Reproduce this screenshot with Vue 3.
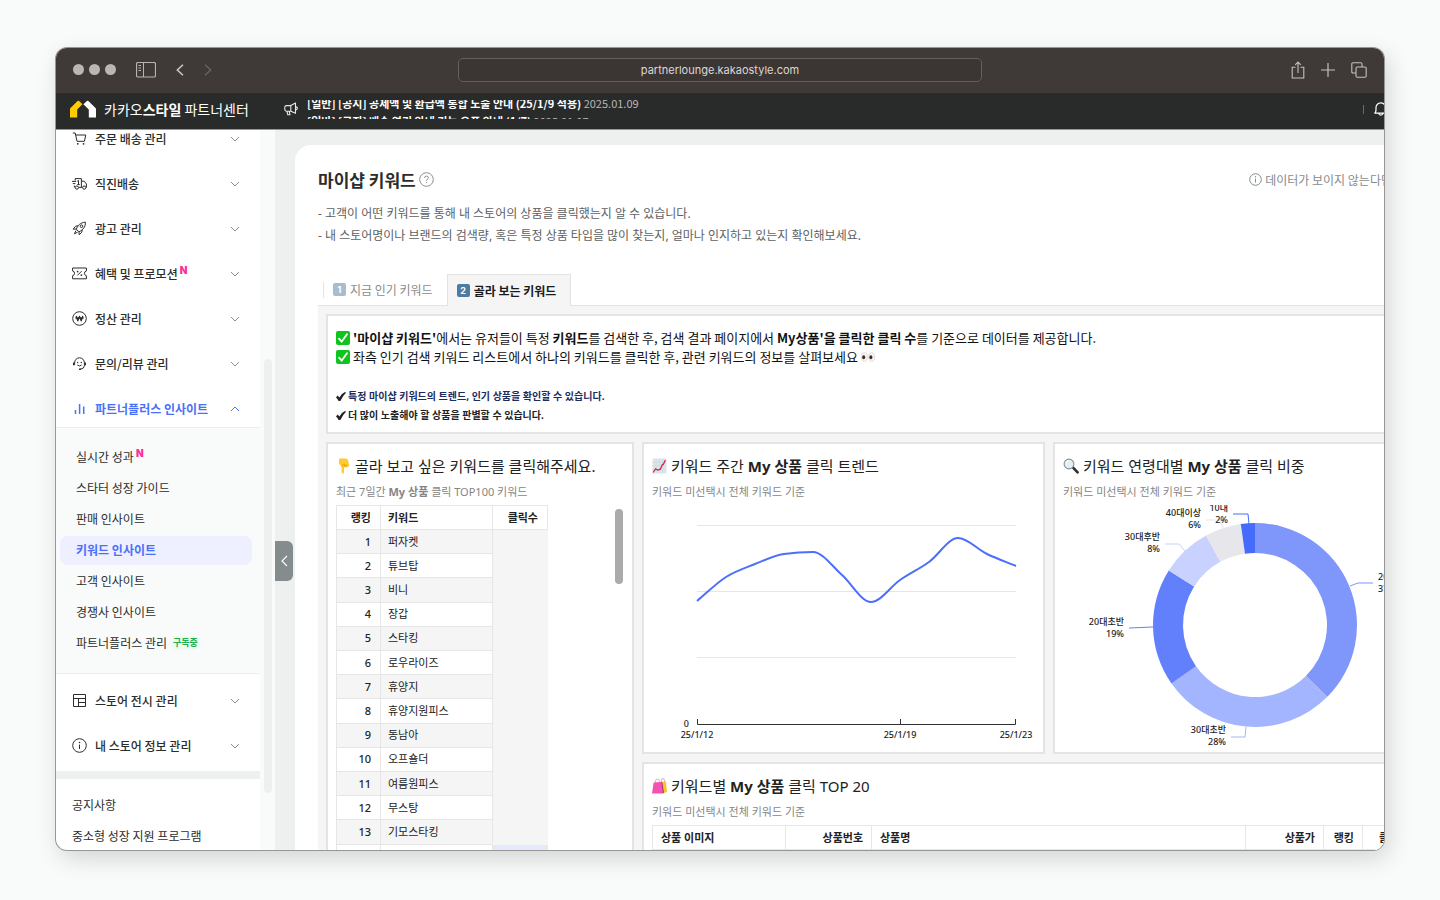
<script setup>
import { ref } from 'vue'

const menu = [
  { icon: 'cart', label: '주문 배송 관리' },
  { icon: 'truck', label: '직진배송' },
  { icon: 'rocket', label: '광고 관리' },
  { icon: 'coupon', label: '혜택 및 프로모션', isNew: true },
  { icon: 'won', label: '정산 관리' },
  { icon: 'support', label: '문의/리뷰 관리' },
  { icon: 'bars', label: '파트너플러스 인사이트', open: true },
]

const insights = [
  { label: '실시간 성과', isNew: true },
  { label: '스타터 성장 가이드' },
  { label: '판매 인사이트' },
  { label: '키워드 인사이트', active: true },
  { label: '고객 인사이트' },
  { label: '경쟁사 인사이트' },
  { label: '파트너플러스 관리', badge: '구독중' },
]

const storeMenu = [
  { icon: 'layout', label: '스토어 전시 관리' },
  { icon: 'info', label: '내 스토어 정보 관리' },
]

const links = ['공지사항', '중소형 성장 지원 프로그램']

const address = ref('partnerlounge.kakaostyle.com')

const keywords = [
  '퍼자켓', '튜브탑', '비니', '장갑', '스타킹', '로우라이즈', '휴양지',
  '휴양지원피스', '동남아', '오프숄더', '여름원피스', '무스탕', '기모스타킹',
]

// Daily clicks from 25/1/12 to 25/1/23, in chart units
const left = 53
const step = 29
const points = [101, 77, 64, 54, 52, 75, 102, 80, 62, 38, 54, 66].map((y, i) => [left + i * step, y])

// Monotone cubic interpolation through the points
function smoothPath(pts) {
  const slope = pts.slice(1).map((p, i) => (p[1] - pts[i][1]) / (p[0] - pts[i][0]))
  const tangent = pts.map((_, i) => {
    if (i === 0) return slope[0]
    if (i === pts.length - 1) return slope[i - 1]
    const a = slope[i - 1]
    const b = slope[i]
    if (a * b <= 0) return 0
    return Math.sign(a) * Math.min(Math.abs(a), Math.abs(b), Math.abs(a + b) / 4) * 2
  })
  let d = `M${pts[0]}`
  for (let i = 1; i < pts.length; i++) {
    const [x0, y0] = pts[i - 1]
    const [x1, y1] = pts[i]
    const h = (x1 - x0) / 3
    d += `C${x0 + h},${y0 + h * tangent[i - 1]} ${x1 - h},${y1 - h * tangent[i]} ${x1},${y1}`
  }
  return d
}
const trend = smoothPath(points)

const cx = 200
const cy = 125
const outer = 102
const inner = 72
const slices = [
  { from: 0, to: 135, color: '#7f96fa' },
  { from: 135, to: 235, color: '#a3b5fe' },
  { from: 235, to: 302.3, color: '#6380fc' },
  { from: 302.3, to: 331.3, color: '#c9d2fe' },
  { from: 331.3, to: 352, color: '#e6e6eb' },
  { from: 352, to: 360, color: '#466afa' },
]
function polar(r, deg) {
  const a = (deg - 90) * Math.PI / 180
  return `${(cx + r * Math.cos(a)).toFixed(2)},${(cy + r * Math.sin(a)).toFixed(2)}`
}
function arc({ from, to }) {
  return `M${polar(outer, from)}A${outer},${outer} 0 0 1 ${polar(outer, to)}L${polar(inner, to)}A${inner},${inner} 0 0 0 ${polar(inner, from)}Z`
}
const labels = [
  { x: 323, y: 80, name: '20대후반', pct: '37%', line: '295,86 303,83 318,83', color: '#7f96fa', start: true },
  { x: 171, y: 233, name: '30대초반', pct: '28%', line: '176,237 190,237 191,227', color: '#a3b5fe' },
  { x: 69, y: 125, name: '20대초반', pct: '19%', line: '74,128 98,127', color: '#6380fc' },
  { x: 105, y: 40, name: '30대후반', pct: '8%', line: '110,44 124,44 130,51', color: '#c9d2fe' },
  { x: 146, y: 16, name: '40대이상', pct: '6%', line: '151,20 165,20 168,28', color: '#e6e6eb' },
  { x: 173, y: 11, name: '10대', pct: '2%', line: '178,14 193,14 194,24', color: '#466afa' },
]
</script>

<template>
  <div class="desktop">
    <div class="window">
      <div class="chrome">
        <div class="chrome-side">
          <span class="dots"><i></i><i></i><i></i></span>
          <button class="tool sidebar-toggle" aria-label="사이드바">
            <svg width="20" height="16" viewBox="0 0 20 16" fill="none" stroke="#b9b4b1">
              <rect x=".5" y=".5" width="19" height="14.5" rx="1.5" stroke-width="1.2" />
              <path d="M7.5 .5V15M2.5 3.5H5M2.5 6H5M2.5 8.5H5" />
            </svg>
          </button>
          <button class="tool back" aria-label="뒤로">
            <svg width="8" height="12" viewBox="0 0 8 12" fill="none" stroke="#cfcbc9" stroke-width="1.5"><path d="M7 .7L1.3 6L7 11.3" /></svg>
          </button>
          <button class="tool" aria-label="앞으로">
            <svg width="8" height="12" viewBox="0 0 8 12" fill="none" stroke="#6a6462" stroke-width="1.4"><path d="M1 .7L6.7 6L1 11.3" /></svg>
          </button>
        </div>
        <input v-model="address" class="address" type="text" aria-label="주소" />
        <div class="chrome-side chrome-right">
          <button class="tool" aria-label="공유">
            <svg width="14" height="18" viewBox="0 0 14 18" fill="none" stroke="#c5c1bf" stroke-width="1.1"><path d="M4.5 6.2H1.2V17H12.8V6.2H9.5M7 12V1.2M4.2 3.8L7 1L9.8 3.8" /></svg>
          </button>
          <button class="tool" aria-label="새 탭">
            <svg width="14" height="14" viewBox="0 0 14 14" fill="none" stroke="#c5c1bf" stroke-width="1.2"><path d="M7 0V14M0 7H14" /></svg>
          </button>
          <button class="tool" aria-label="탭 보기">
            <svg width="16" height="16" viewBox="0 0 16 16" fill="none" stroke="#c5c1bf" stroke-width="1.1"><path d="M5 11H2Q.8 11 .8 10V2Q.8 .8 2 .8H9.8Q11 .8 11 2V5" /><rect x="5" y="5" width="10.2" height="10.2" rx="1.2" /></svg>
          </button>
        </div>
      </div>

      <header class="topbar">
        <a class="brand" href="#">
          <svg width="26" height="18" viewBox="0 0 26 18">
            <path d="M0 17.5V9.3Q0 8.6 .5 8.1L7.6 1.1Q8.3 .4 9.1 1L12.4 4.2L7.2 9.4V17.5Z" fill="#ffcd00" />
            <path d="M26 17.5V9.3Q26 8.6 25.5 8.1L18.4 1.1Q17.6 .4 16.9 1L13.4 4.2L18.8 9.4V17.5Z" fill="#fff" />
          </svg>
          <span>카카오<b>스타일</b> 파트너센터</span>
        </a>
        <svg class="horn" width="14" height="14" viewBox="0 0 14 14" fill="none" stroke="#e6e8e7" stroke-width="1.1" stroke-linejoin="round">
          <path d="M11.5 1V11.3L6.8 9.2H2.5Q.8 9.2 .8 7.6V5.2Q.8 3.6 2.5 3.6H6.8ZM6.8 3.6V9.2M3 9.3L3.8 12.8H6L5.2 9.3M11.6 4.6Q13.4 5 13.4 6.3T11.6 8" />
        </svg>
        <ul class="ticker">
          <li><b>[일반] [공지] 공제액 및 환급액 통합 노출 안내 (25/1/9 적용)</b> <time>2025.01.09</time></li>
          <li><b>[일반] [공지] 배송 연기 안내 기능 오픈 안내 (1/7)</b> <time>2025.01.07</time></li>
        </ul>
        <span class="split"></span>
        <button class="bell" aria-label="알림">
          <svg width="14" height="15" viewBox="0 0 14 15" fill="none" stroke="#fff" stroke-width="1.2" stroke-linejoin="round"><path d="M.8 11.2Q2 10 2 8V5.6A4.8 4.8 0 0 1 11.6 5.6V8Q11.6 10 12.8 11.2ZM4.6 11.4A2.3 2.4 0 0 0 9 11.4" /></svg>
        </button>
      </header>

      <div class="body">
        <aside class="sidebar">
          <nav class="group group-top">
            <button v-for="item in menu" :key="item.label" class="item" :class="{ open: item.open }">
              <svg class="icon" width="15" height="15" viewBox="0 0 15 15" fill="none" stroke="currentColor" stroke-linejoin="round">
                <g v-if="item.icon === 'cart'">
                  <path d="M.8 2H3.2L5 10.3H12.4L13.8 4H3.7" />
                  <circle cx="5.8" cy="12.8" r=".9" fill="currentColor" stroke="none" /><circle cx="11.6" cy="12.8" r=".9" fill="currentColor" stroke="none" />
                </g>
                <g v-else-if="item.icon === 'truck'">
                  <path d="M3.2 4.6V2.6H9.4V11.4H7M2.9 11.2H2.4V9.6M9.4 5.2H12.2L14.4 8V11.4H14M9.4 11.4H10.4M0 5.4H4M.8 7.6H3.4" />
                  <path d="M5.2 5.2L6.5 4.6V8.6M5.2 8.6H7.8" /><circle cx="4.9" cy="11.6" r="1.6" /><circle cx="12.2" cy="11.6" r="1.6" />
                </g>
                <g v-else-if="item.icon === 'rocket'">
                  <path d="M4.4 8.4C5 4.8 8.6 1.4 13.4 1.2C13.7 5.8 10.6 9.4 6.9 10.7ZM4.6 8L1.2 8.2L3.6 5.2L6.3 4.8M7 10.6L7.2 13.8L9.8 11.2L10.2 8.5M4 9.6L2.4 12.8L5.6 11.2" /><circle cx="9.5" cy="5.2" r="1.3" />
                </g>
                <g v-else-if="item.icon === 'coupon'">
                  <path d="M.6 2H14.4V5Q12.4 5.4 12.4 7.3T14.4 9.7V12.8H.6V9.7Q2.6 9.2 2.6 7.3T.6 5Z" /><path d="M5.4 9.4L9.6 5.2" />
                  <circle cx="5.6" cy="5.6" r=".9" fill="currentColor" stroke="none" /><circle cx="9.4" cy="9.1" r=".9" fill="currentColor" stroke="none" />
                </g>
                <g v-else-if="item.icon === 'won'">
                  <circle cx="7.5" cy="7.5" r="6.8" /><path d="M4.2 5L5.8 9.8L7.5 5.4L9.2 9.8L10.8 5M3.4 7H11.6" stroke-width="1.3" />
                </g>
                <g v-else-if="item.icon === 'support'">
                  <path d="M2.6 8.8V6.8A4.9 5 0 0 1 12.4 6.8V9.8Q12.2 12.6 8.4 13.2" />
                  <path d="M1.8 6.6V9.2M13.2 6.6V9.2M7 13.2H9" stroke-width="1.6" />
                  <path d="M5.4 9Q7.5 11 9.6 9" /><circle cx="5.7" cy="6.5" r=".7" fill="currentColor" stroke="none" /><circle cx="9.3" cy="6.5" r=".7" fill="currentColor" stroke="none" />
                </g>
                <path v-else d="M3.5 13V9M7.6 13V3M11.7 13V5.4" stroke-width="1.5" />
              </svg>
              <span>{{ item.label }}</span>
              <sup v-if="item.isNew" class="new">N</sup>
              <svg class="chevron" width="10" height="6" viewBox="0 0 10 6" fill="none" stroke="currentColor"><path :d="item.open ? 'M1 5L5 1L9 5' : 'M1 1L5 5L9 1'" /></svg>
            </button>
          </nav>
          <nav class="submenu">
            <a v-for="item in insights" :key="item.label" href="#" class="subitem" :class="{ active: item.active }">
              {{ item.label }}
              <sup v-if="item.isNew" class="new">N</sup>
              <span v-if="item.badge" class="badge">{{ item.badge }}</span>
            </a>
          </nav>
          <nav class="group group-store">
            <button v-for="item in storeMenu" :key="item.label" class="item">
              <svg class="icon" width="15" height="15" viewBox="0 0 15 15" fill="none" stroke="currentColor">
                <path v-if="item.icon === 'layout'" d="M1.5 1.5H13.5V13.5H1.5ZM1.5 5.5H13.5M6.5 5.5V13.5M6.5 9.5H13.5" />
                <g v-else><circle cx="7.5" cy="7.5" r="6.8" /><path d="M7.5 6.6V11" /><circle cx="7.5" cy="4.5" r=".8" fill="currentColor" stroke="none" /></g>
              </svg>
              <span>{{ item.label }}</span>
              <svg class="chevron" width="10" height="6" viewBox="0 0 10 6" fill="none" stroke="currentColor"><path d="M1 1L5 5L9 1" /></svg>
            </button>
          </nav>
          <nav class="links">
            <a v-for="text in links" :key="text" href="#">{{ text }}</a>
          </nav>
        </aside>
        <div class="gutter"><span class="thumb"></span></div>

        <main class="main">
          <button class="collapse" aria-label="메뉴 접기">
            <svg width="7" height="12" viewBox="0 0 7 12" fill="none" stroke="#fff" stroke-width="1.1"><path d="M6 1L1 6L6 11" /></svg>
          </button>
          <section class="page">
            <div class="heading">
              <h1>마이샵 키워드</h1>
              <svg width="15" height="15" viewBox="0 0 15 15" fill="none" stroke="#8a9092"><circle cx="7.5" cy="7.5" r="6.8" /><path d="M5.6 6Q5.6 4.1 7.5 4.1T9.4 5.8Q9.4 6.6 8.4 7.2Q7.5 7.8 7.5 8.8" /><circle cx="7.5" cy="10.6" r=".7" fill="#8a9092" stroke="none" /></svg>
              <a class="hint" href="#">
                <svg width="13" height="13" viewBox="0 0 13 13" fill="none" stroke="currentColor"><circle cx="6.5" cy="6.5" r="5.8" /><path d="M6.5 5.6V9.5" /><circle cx="6.5" cy="3.8" r=".7" fill="currentColor" stroke="none" /></svg>
                데이터가 보이지 않는다면
              </a>
            </div>
            <p class="desc">- 고객이 어떤 키워드를 통해 내 스토어의 상품을 클릭했는지 알 수 있습니다.<br />- 내 스토어명이나 브랜드의 검색량, 혹은 특정 상품 타입을 많이 찾는지, 얼마나 인지하고 있는지 확인해보세요.</p>

            <div class="tabs" role="tablist">
              <button class="tab" role="tab" aria-selected="false"><i class="key">1</i>지금 인기 키워드</button>
              <button class="tab selected" role="tab" aria-selected="true"><i class="key">2</i>골라 보는 키워드</button>
            </div>

            <div class="panel">
              <div class="card notice">
                <p class="lead">
                  <svg class="check" width="14" height="14" viewBox="0 0 14 14"><rect width="14" height="14" rx="2" fill="#0fc41c" /><path d="M3 7.6L5.7 10.6L11 3.2" fill="none" stroke="#fff" stroke-width="1.8" stroke-linecap="round" /></svg>
                  <span><b>'마이샵 키워드'</b>에서는 유저들이 특정 <b>키워드</b>를 검색한 후, 검색 결과 페이지에서 <b>My상품'을 클릭한 클릭 수</b>를 기준으로 데이터를 제공합니다.</span>
                </p>
                <p class="lead">
                  <svg class="check" width="14" height="14" viewBox="0 0 14 14"><rect width="14" height="14" rx="2" fill="#0fc41c" /><path d="M3 7.6L5.7 10.6L11 3.2" fill="none" stroke="#fff" stroke-width="1.8" stroke-linecap="round" /></svg>
                  <span>좌측 인기 검색 키워드 리스트에서 하나의 키워드를 클릭한 후, 관련 키워드의 정보를 살펴보세요</span>
                  <svg width="14" height="12" viewBox="0 0 14 12"><g fill="#f4f4f4" stroke="#c9c9c9" stroke-width=".5"><ellipse cx="3.4" cy="6" rx="3" ry="4.4" /><ellipse cx="10.6" cy="6" rx="3" ry="4.4" /></g><ellipse cx="2.7" cy="6.3" rx="1.5" ry="2" fill="#45291c" /><ellipse cx="9.9" cy="6.3" rx="1.5" ry="2" fill="#45291c" /></svg>
                </p>
                <ul class="points">
                  <li><svg width="10" height="9" viewBox="0 0 10 9"><path d="M0 5.4L1.6 3.6L3.4 5.4Q5.6 1.4 9 0L10 .8Q6.6 4 4.4 9H2.6Q1.6 6.6 0 5.4Z" fill="#222" /></svg><span class="navy">특정 마이샵 키워드의 트렌드, 인기 상품을 확인할 수 있습니다.</span></li>
                  <li><svg width="10" height="9" viewBox="0 0 10 9"><path d="M0 5.4L1.6 3.6L3.4 5.4Q5.6 1.4 9 0L10 .8Q6.6 4 4.4 9H2.6Q1.6 6.6 0 5.4Z" fill="#222" /></svg><span>더 많이 노출해야 할 상품을 판별할 수 있습니다.</span></li>
                </ul>
              </div>

              <section class="card ranking">
                <h2>
                  <svg width="15" height="16" viewBox="1 0 15 16"><path d="M4 1.8Q4 .4 5.6 .4H10.6Q12.6 .4 13 2L14.2 6.8Q14.4 8.4 13.4 8.8L10.6 9.4L9 8.8V14Q9 15.6 7.8 15.6T6.6 14V8.4L4.4 6.2Q3.6 5.2 4 4Z" fill="#ffc933" /><path d="M6.6 8.4L9.2 5.6M9 8.8L10 6M10.8 9.2L11.4 6.4" fill="none" stroke="#e59600" stroke-width=".8" /></svg>
                  골라 보고 싶은 키워드를 클릭해주세요.
                </h2>
                <p class="sub">최근 7일간 <b>My 상품</b> 클릭 TOP100 키워드</p>
                <div class="scroller">
                  <table class="rank">
                    <thead><tr><th class="num">랭킹</th><th class="word">키워드</th><th class="hits">클릭수</th></tr></thead>
                    <tbody>
                      <tr v-for="(word, i) in keywords" :key="word" :class="{ odd: i % 2 === 0 }">
                        <td class="num">{{ i + 1 }}</td>
                        <td class="word">{{ word }}</td>
                        <td v-if="i === 0" class="hits masked" :rowspan="keywords.length"></td>
                      </tr>
                      <tr><td class="num"></td><td class="word"></td><td class="hits tint"></td></tr>
                    </tbody>
                  </table>
                  <span class="bar"></span>
                </div>
              </section>

              <section class="card">
                <h2>
                  <svg width="15" height="16" viewBox="0 0 15 16"><rect x=".5" y=".5" width="14" height="15" fill="#dde6ee" /><path d="M.5 4.2H14.5M.5 8H14.5M.5 11.8H14.5M4 .5V15.5M7.5 .5V15.5M11 .5V15.5" stroke="#c6d3df" stroke-width=".5" /><path d="M1 14.5L3.6 10.8L5.6 12L8.4 11.2L10.4 6.6L11.4 6.2L13.4 2" fill="none" stroke="#d5283a" stroke-width="1.3" /></svg>
                  <span>키워드 주간 <b>My 상품</b> 클릭 트렌드</span>
                </h2>
                <p class="sub">키워드 미선택시 전체 키워드 기준</p>
                <svg class="chart" viewBox="0 0 399 252">
                  <path d="M53 25.5H372M53 91.5H372M53 157.5H372" stroke="#e6e6e6" />
                  <path d="M53.5 219V224.5H371.5V219M256.5 219V224" fill="none" stroke="#333" />
                  <path :d="trend" fill="none" stroke="#4b6ffb" stroke-width="2" />
                  <text x="45" y="227" text-anchor="end">0</text>
                  <g text-anchor="middle"><text x="53" y="238">25/1/12</text><text x="256" y="238">25/1/19</text><text x="372" y="238">25/1/23</text></g>
                </svg>
              </section>

              <section class="card">
                <h2>
                  <svg width="16" height="16" viewBox="0 0 16 16"><path d="M9.6 9.2L14.6 14.4" stroke="#2e2e2e" stroke-width="2.6" stroke-linecap="round" /><circle cx="6" cy="6" r="4.9" fill="#e3eef5" stroke="#8b9094" stroke-width="1.1" /><path d="M3 5Q3.6 3 5.8 2.8" fill="none" stroke="#fff" stroke-width="1.2" /></svg>
                  <span>키워드 연령대별 <b>My 상품</b> 클릭 비중</span>
                </h2>
                <p class="sub">키워드 미선택시 전체 키워드 기준</p>
                <svg class="chart" viewBox="0 0 399 252">
                  <clipPath id="donut-area"><rect y="5" width="399" height="247" /></clipPath>
                  <path v-for="slice in slices" :key="slice.from" :d="arc(slice)" :fill="slice.color" />
                  <g clip-path="url(#donut-area)">
                    <g v-for="label in labels" :key="label.name">
                      <polyline :points="label.line" fill="none" :stroke="label.color" />
                      <text :x="label.x" :y="label.y" :text-anchor="label.start ? 'start' : 'end'">{{ label.name }}</text>
                      <text :x="label.x" :y="label.y + 12" :text-anchor="label.start ? 'start' : 'end'">{{ label.pct }}</text>
                    </g>
                  </g>
                </svg>
              </section>

              <section class="card top20">
                <h2>
                  <svg width="15" height="16" viewBox="0 0 15 16"><path d="M8 4L14 3.4L15 14L10 15.4Z" fill="#f6c532" /><path d="M9.4 4V2.2Q9.6 .6 11 .6T12.6 2.2V4M3.4 5V3Q3.6 1.2 5.4 1.2T7.4 3V5" fill="none" stroke="#e79bbd" stroke-width=".9" /><path d="M1.6 4.4L9 4L11 15.6H0Z" fill="#f551b5" /><path d="M9 4L11 15.6L12 14.4L10.4 4.6Z" fill="#b92b85" /></svg>
                  <span>키워드별 <b>My 상품</b> 클릭 TOP 20</span>
                </h2>
                <p class="sub">키워드 미선택시 전체 키워드 기준</p>
                <table class="products">
                  <colgroup><col class="c-image" /><col class="c-no" /><col class="c-name" /><col class="c-price" /><col class="c-rank" /><col /></colgroup>
                  <thead><tr><th>상품 이미지</th><th class="end">상품번호</th><th>상품명</th><th class="end">상품가</th><th class="end">랭킹</th><th class="last">클릭수</th></tr></thead>
                  <tbody><tr><td></td><td></td><td></td><td></td><td></td><td></td></tr></tbody>
                </table>
              </section>
            </div>
          </section>
        </main>
      </div>
    </div>
  </div>
</template>

<style>
body { margin: 0; background: #f9fbfa; }
</style>

<style scoped>
* { box-sizing: border-box; margin: 0; padding: 0; }
ul { list-style: none; }
i { font-style: normal; }
a { color: inherit; text-decoration: none; }
button { border: 0; background: none; font: inherit; color: inherit; cursor: pointer; }
svg { display: block; flex: none; }

.desktop {
  height: 100vh;
  padding: 48px 56px 50px;
  overflow: hidden;
  background: #f9fbfa;
  font-family: "Noto Sans CJK KR", "Noto Sans", sans-serif;
  font-size: 12px;
  color: #2b2d2d;
}
.window {
  display: flex;
  flex-direction: column;
  height: 100%;
  overflow: hidden;
  border-radius: 11px;
  background: #fff;
  box-shadow: 0 0 0 1px #989696, 4px 8px 24px rgba(0, 0, 0, .16);
}

.chrome { display: flex; flex: none; align-items: center; height: 45px; padding: 0 17px 2px; background: #3f3937; }
.chrome-side { display: flex; flex: 1; align-items: center; }
.chrome-right { justify-content: flex-end; gap: 16px; }
.dots { display: flex; gap: 5px; }
.dots i { width: 11px; height: 11px; border-radius: 50%; background: #bcb6b3; }
.tool { display: flex; }
.sidebar-toggle { margin-left: 20px; }
.back { margin: 0 20px; }
.address {
  width: 524px;
  height: 24px;
  border: 1px solid #645e5c;
  border-radius: 5px;
  background: #3b3533;
  font: 11px Inter, sans-serif;
  color: #dbd8d7;
  text-align: center;
}

.topbar { display: flex; flex: none; align-items: center; height: 37px; padding: 0 0 4px 14px; border-bottom: 1px solid #989696; background: #292b2a; color: #fff; }
.brand { display: flex; flex: none; align-items: center; gap: 8px; width: 214px; font-size: 14px; line-height: 20px; font-weight: 400; white-space: nowrap; }
.brand b { font-weight: 700; }
.ticker { flex: 1; height: 19px; margin: 1px 0 0 9px; overflow: hidden; font-size: 11px; line-height: 18px; white-space: nowrap; }
.ticker li:first-child { margin-top: -6px; }
.ticker time { color: #b5b8b7; }
.split { width: 1px; height: 9px; background: #686b6a; }
.bell { width: 20px; padding-left: 10px; }

.body { display: flex; flex: 1; min-height: 0; }
.sidebar { flex: none; width: 204px; overflow: hidden; }
.group { display: flex; flex-direction: column; gap: 16px; }
.group-top { margin-top: -6px; padding-bottom: 4px; }
.item { display: flex; align-items: center; height: 29px; padding: 0 20px 0 16px; font-weight: 500; line-height: 18px; text-align: left; }
.icon { margin-right: 8px; }
.chevron { margin-left: auto; color: #8b8e8e; }
.open, .open .chevron { color: #4b6ffb; }
.item.open { font-weight: 700; }
.new { align-self: flex-start; padding: 5px 0 0 2px; font: 900 10px/12px Inter, sans-serif; color: #ff2d9b; }
.submenu { display: flex; flex-direction: column; gap: 2px; padding: 15px 8px 15px 4px; border: solid #eceeee; border-width: 1px 0; background: #f9fbfa; }
.subitem { display: flex; align-items: center; height: 29px; padding: 0 16px 2px; border-radius: 8px; line-height: 18px; }
.subitem.active { background: #eeefff; font-weight: 700; color: #4b6ffb; }
.subitem .new { padding-top: 4px; }
.badge { margin-left: 3px; padding: 0 3px; border-radius: 8px; background: #effaf3; font-size: 9px; line-height: 14px; font-weight: 700; color: #1fae4b; }
.group-store { padding: 12px 0 11px; }
.links { display: flex; flex-direction: column; gap: 2px; padding: 11px 16px 0; border-top: 8px solid #eef0f0; line-height: 29px; }
.gutter { display: flex; flex: none; justify-content: center; width: 15px; background: #f9fbfa; }
.thumb { width: 8px; height: 434px; margin-top: 229px; border-radius: 4px; background: #eef0f0; }

.main { position: relative; flex: 1; min-width: 0; padding: 15px 0 0 20px; overflow: hidden; background: #eef0f0; }
.collapse { position: absolute; top: 411px; left: 0; display: flex; align-items: center; justify-content: center; width: 18px; height: 40px; border-radius: 0 6px 6px 0; background: #858c8e; }
.page { margin-right: -103px; padding: 22px 23px 0; border-radius: 16px 0 0 0; background: #fff; }
.heading { display: flex; align-items: center; gap: 3px; padding-right: 72px; line-height: 25px; }
h1 { font-size: 17px; line-height: 25px; font-weight: 700; }
.hint { display: flex; align-items: center; gap: 3px; margin-left: auto; color: #858c8e; }
.desc { margin-top: 11px; font-family: "Noto Sans", "Noto Sans CJK KR", sans-serif; line-height: 22px; color: #5c6162; }

.tabs { display: flex; align-items: center; height: 31px; margin-top: 27px; padding-left: 5px; }
.tab { display: flex; align-items: center; gap: 4px; padding: 0 14px 0 9px; border-left: 1px solid #e3e3e3; line-height: 16px; color: #8b8b8b; }
.tab.selected { height: 32px; margin-bottom: -1px; border: 1px solid #e3e3e3; border-bottom: 0; background: #f5f5f5; font-weight: 700; color: #1b1b1b; z-index: 1; }
.key { width: 13px; height: 13px; border-radius: 2px; background: #4f7ba2; font: 700 9px/13px Inter, sans-serif; color: #fff; text-align: center; }
.tab:not(.selected) .key { opacity: .5; }

.panel { display: grid; grid-template-columns: 308fr 403fr 403fr; gap: 8px; padding: 8px; border-top: 1px solid #e3e3e3; background: #f5f5f5; font-family: "Noto Sans", "Noto Sans CJK KR", sans-serif; }
.card { min-width: 0; border: 2px solid #e4e4e4; background: #fff; }
.notice { grid-column: 1 / -1; padding: 12px 8px 7px; color: #111; }
.lead { display: flex; align-items: center; gap: 3px; font-family: "Noto Sans CJK KR", sans-serif; font-size: 13px; line-height: 19px; white-space: nowrap; }
.points { margin-top: 21px; font-size: 10px; line-height: 19px; font-weight: 700; color: #222; }
.points li { display: flex; align-items: center; gap: 2px; }
.navy { color: #1c2c5e; }

h2 { display: flex; align-items: center; gap: 4px; padding: 0 8px; margin-top: 11px; font-size: 15px; line-height: 22px; font-weight: 400; color: #222; white-space: nowrap; }
.sub { margin-top: 7px; padding: 0 8px; font-size: 11px; line-height: 16px; color: #858585; }
.ranking { grid-row: span 2; }
.scroller { display: flex; align-items: flex-start; justify-content: space-between; margin-top: 5px; padding: 0 9px 0 8px; }
table { border-collapse: collapse; font-size: 11px; line-height: 16px; color: #222; }
.rank { width: 211px; height: 364px; table-layout: fixed; }
.rank th, .rank td { height: 24px; border: 1px solid #e6e6e6; text-align: left; white-space: nowrap; }
.rank .num { width: 44px; padding-right: 9px; text-align: right; font-weight: 500; }
.rank .word { width: 112px; padding-left: 7px; }
.rank .hits { width: 55px; padding-right: 9px; text-align: right; }
.rank thead th.num, .rank thead th { font-weight: 700; }
.rank .odd { background: #f5f5f5; }
.rank .masked { border-right-color: #f5f5f5; border-bottom-color: #f5f5f5; background: #f5f5f5; }
.rank .tint { background: #e5e9fc; }
.bar { width: 8px; height: 75px; margin-top: 4px; border-radius: 4px; background: #ababab; }

.chart { width: 100%; font-size: 9px; font-weight: 500; fill: #222; }

.top20 { grid-column: 2 / -1; }
.products { width: 100%; height: 96px; margin: 5px 0 0 8px; table-layout: fixed; }
.products th, .products td { height: 24px; padding: 0 8px; border: 1px solid #e6e6e6; text-align: left; }
.products .end { text-align: right; }
.products .last { padding-left: 16px; }
.c-image { width: 133px; }
.c-no { width: 86px; }
.c-name { width: 374px; }
.c-price { width: 78px; }
.c-rank { width: 39px; }
</style>
